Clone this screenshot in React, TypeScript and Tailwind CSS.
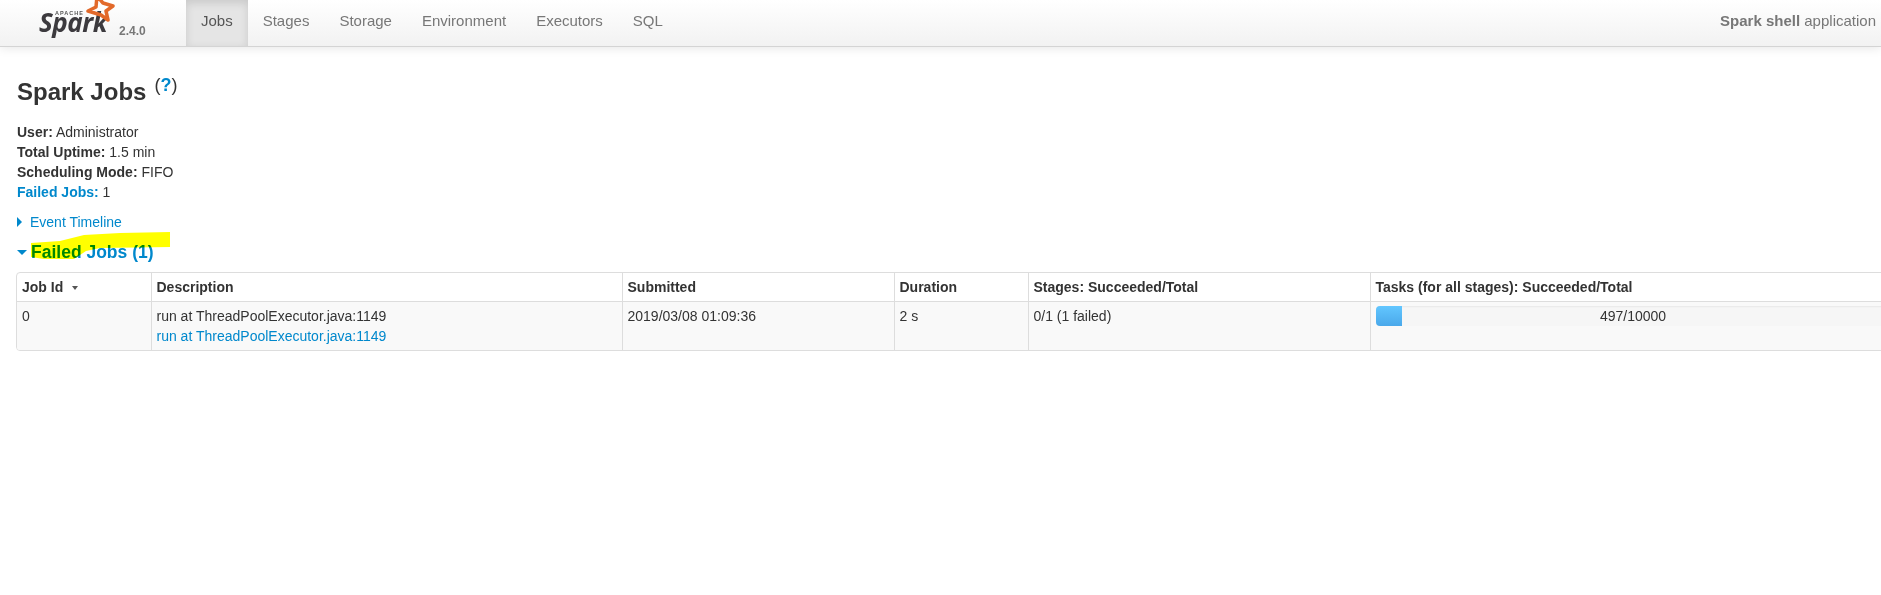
const navItems = ['Jobs', 'Stages', 'Storage', 'Environment', 'Executors', 'SQL']

function SparkLogo() {
  return (
    <div className="relative w-[92px] h-[46px] shrink-0">
      <span className="absolute left-[3px] top-[5px] text-[26px] leading-[34px] font-bold italic tracking-[-0.5px] text-[#3c3a3e] font-['Open_Sans',sans-serif]">Spark</span>
      <span className="absolute left-[19px] top-[10px] text-[5.5px] leading-[6px] font-bold tracking-[1px] text-[#555]">APACHE</span>
      <svg className="absolute left-[46px] top-0" width="34" height="24" viewBox="0 0 34 24" fill="none">
        <path d="M15 -4 L21 3 L31 6 L24 11 L26 20 L19 15 L6 11 L14 7 Z" stroke="#e2692a" strokeWidth="3.5" strokeLinejoin="round" />
      </svg>
    </div>
  )
}

function Navbar() {
  return (
    <div className="flex h-[47px] border-b border-[#d4d4d4] bg-gradient-to-b from-white to-[#f2f2f2] shadow-[0_1px_10px_rgba(0,0,0,0.1)] text-[15px] text-[#777]">
      <div className="w-[186px] flex shrink-0 pl-[36px]">
        <SparkLogo />
        <span className="mt-[24px] -ml-[9px] text-[12px] leading-[14px] font-bold text-[#777]">2.4.0</span>
      </div>
      <div className="flex">
        {navItems.map((item, i) => (
          <div
            key={item}
            className={`h-[46px] px-[15px] leading-[41px] ${i === 0 ? 'bg-[#e5e5e5] text-[#555] shadow-[inset_0_3px_8px_rgba(0,0,0,0.125)]' : ''}`}
          >
            {item}
          </div>
        ))}
      </div>
      <div className="ml-auto pr-[5px] leading-[41px]">
        <strong>Spark shell</strong> application
      </div>
    </div>
  )
}

const th = 'px-[5px] h-[28px] text-left align-middle font-bold border-l border-[#ddd]'
const td = 'px-[5px] pt-[4px] align-top border-l border-t border-[#ddd]'

function JobsTable() {
  return (
    <div className="ml-[16px] w-[1900px] border border-[#ddd] rounded-[4px] overflow-hidden mt-[5px]">
      <table className="w-full table-fixed border-collapse">
        <colgroup>
          <col className="w-[134px]" />
          <col className="w-[471px]" />
          <col className="w-[272px]" />
          <col className="w-[134px]" />
          <col className="w-[342px]" />
          <col />
        </colgroup>
        <thead>
          <tr>
            <th className={`${th} border-l-0`}>
              Job Id
              <span className="inline-block ml-[9px] mb-[2px] border-x-[3px] border-t-[4px] border-x-transparent border-t-[#555]" />
            </th>
            <th className={th}>Description</th>
            <th className={th}>Submitted</th>
            <th className={th}>Duration</th>
            <th className={th}>Stages: Succeeded/Total</th>
            <th className={th}>Tasks (for all stages): Succeeded/Total</th>
          </tr>
        </thead>
        <tbody>
          <tr className="bg-[#f9f9f9] h-[49px]">
            <td className={`${td} border-l-0`}>0</td>
            <td className={td}>
              <div>run at ThreadPoolExecutor.java:1149</div>
              <a className="text-[#0088cc]">run at ThreadPoolExecutor.java:1149</a>
            </td>
            <td className={td}>2019/03/08 01:09:36</td>
            <td className={td}>2 s</td>
            <td className={td}>0/1 (1 failed)</td>
            <td className={td}>
              <div className="relative h-[20px] w-[515px] bg-[#f6f6f6] rounded-l-[4px] shadow-[inset_0_1px_2px_rgba(0,0,0,0.06)] text-center">
                <div className="absolute left-0 top-0 h-[20px] w-[26px] rounded-l-[4px] bg-gradient-to-b from-[#62c6ff] to-[#4aa8ea]" />
                <span className="relative">497/10000</span>
              </div>
            </td>
          </tr>
        </tbody>
      </table>
    </div>
  )
}

export default function App() {
  return (
    <div className="relative min-h-[595px] overflow-hidden bg-white font-['Liberation_Sans',Arial,sans-serif] text-[14px] leading-[20px] text-[#333]">
      <Navbar />
      <div className="pl-[17px] pt-[25px]">
        <h3 className="text-[24px] leading-[40px] font-bold">
          Spark Jobs
          <sup className="ml-[8px] text-[18px] font-normal -top-[9px] relative">
            (<a className="text-[#0088cc] font-bold">?</a>)
          </sup>
        </h3>
        <ul className="mt-[10px]">
          <li><strong>User:</strong> Administrator</li>
          <li><strong>Total Uptime:</strong> 1.5 min</li>
          <li><strong>Scheduling Mode:</strong> FIFO</li>
          <li><a className="text-[#0088cc]"><strong>Failed Jobs:</strong></a> 1</li>
        </ul>
        <div className="mt-[10px] flex items-center text-[#0088cc]">
          <span className="border-y-[5px] border-l-[5px] border-y-transparent border-l-[#0088cc]" />
          <span className="ml-[8px]">Event Timeline</span>
        </div>
        <h4 className="mt-[5px] flex items-center text-[17.5px] leading-[30px] font-bold text-[#0088cc]">
          <span className="border-x-[5px] border-t-[5px] border-x-transparent border-t-[#0088cc]" />
          <span className="ml-[4px]">Failed Jobs (1)</span>
        </h4>
      </div>
      <JobsTable />
      {/* marker scribble over the heading */}
      <svg className="absolute left-0 top-0 mix-blend-multiply pointer-events-none" width="180" height="270">
        <path d="M31 243 L60 241 L84 235 L120 233 L170 232 L170 247 L100 248 L86 251 L74 259 L44 259 L31 257 Z" fill="#ffff00" />
      </svg>
    </div>
  )
}
